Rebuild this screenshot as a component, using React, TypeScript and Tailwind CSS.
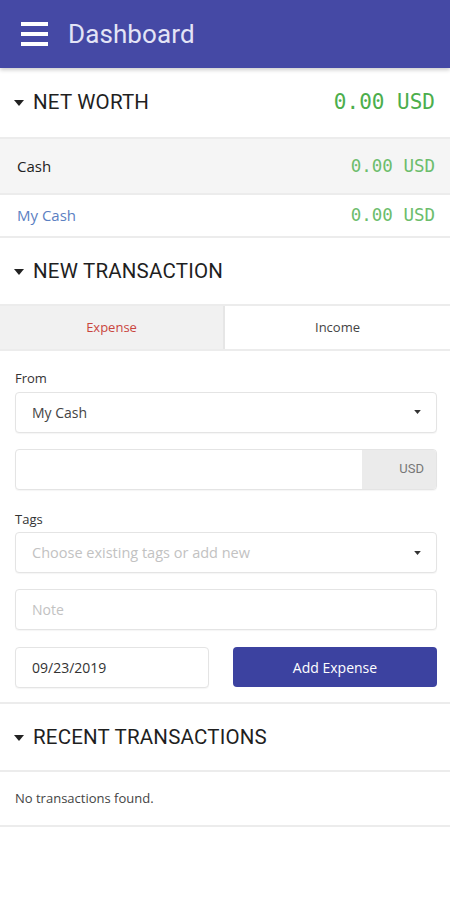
function Caret({ className = "" }: { className?: string }) {
  return (
    <svg viewBox="0 0 10 6" className={className} width="10" height="6">
      <path d="M0 0h10L5 6z" fill="currentColor" />
    </svg>
  );
}

function Hamburger() {
  return (
    <svg width="27" height="24" viewBox="0 0 27 24" className="text-white">
      <rect x="0" y="0" width="27" height="4" fill="currentColor" />
      <rect x="0" y="10" width="27" height="4" fill="currentColor" />
      <rect x="0" y="20" width="27" height="4" fill="currentColor" />
    </svg>
  );
}

function SectionHeading({ title, right, h }: { title: string; right?: string; h: string }) {
  return (
    <div className={`flex items-center justify-between pl-[14px] pr-[15px] border-b-2 border-[#ececec] ${h}`}>
      <div className="flex items-center gap-[9px] text-[#1f1f1f]">
        <Caret className="text-[#222] mt-[1px]" />
        <span className="text-[20.5px] tracking-[0.2px] font-['Roboto',sans-serif]">{title}</span>
      </div>
      {right && (
        <span className="text-[21px] text-[#4cae4c] font-['DejaVu_Sans_Mono',monospace]">{right}</span>
      )}
    </div>
  );
}

const field = "h-[41px] rounded-[4px] border border-[#e4e4e4] bg-white shadow-[0_1px_1px_rgba(0,0,0,0.04)]";

export default function App() {
  return (
    <div className="min-h-screen bg-white font-['Open_Sans',sans-serif] text-[#333]">
      {/* Top bar */}
      <div className="h-[68px] bg-[#4549a5] flex items-center pl-[21px] gap-[20px] shadow-[0_2px_4px_rgba(0,0,0,0.2)] relative z-10">
        <Hamburger />
        <span className="text-[26px] text-[#e3e4f6] font-['Roboto',sans-serif] tracking-[0.1px]">Dashboard</span>
      </div>

      {/* Net worth */}
      <SectionHeading title="NET WORTH" right="0.00 USD" h="h-[71px]" />
      <div className="h-[56px] bg-[#f5f5f5] flex items-center justify-between pl-[17px] pr-[15px] border-b-2 border-[#ececec]">
        <span className="text-[15px] text-[#222]">Cash</span>
        <span className="text-[17.5px] text-[#6cbd6c] font-['DejaVu_Sans_Mono',monospace]">0.00 USD</span>
      </div>
      <div className="h-[43px] flex items-center justify-between pl-[17px] pr-[15px] border-b-2 border-[#ececec]">
        <span className="text-[15px] text-[#5b80c2]">My Cash</span>
        <span className="text-[17.5px] text-[#6cbd6c] font-['DejaVu_Sans_Mono',monospace]">0.00 USD</span>
      </div>

      {/* New transaction */}
      <SectionHeading title="NEW TRANSACTION" h="h-[68px]" />
      <div className="grid grid-cols-2 h-[45px] border-b-2 border-[#ececec] text-[13px]">
        <div className="bg-[#f1f1f1] flex items-center justify-center text-[#c9453e] border-r-2 border-[#e6e6e6]">Expense</div>
        <div className="flex items-center justify-center text-[#444]">Income</div>
      </div>

      <div className="pl-[15px] pr-[13px] pt-[18px] pb-[14px] flex flex-col border-b-2 border-[#ececec]">
        <label className="text-[13px] text-[#333] mb-[3px]">From</label>
        <div className={`${field} flex items-center justify-between pl-[16px] pr-[15px]`}>
          <span className="text-[14px] text-[#444]">My Cash</span>
          <Caret className="text-[#333] w-[7px] h-[4px]" />
        </div>

        <div className={`${field} mt-[16px] flex overflow-hidden`}>
          <div className="flex-1" />
          <div className="w-[74px] bg-[#ebebeb] flex items-center justify-end pr-[12px] text-[13px] text-[#777] font-['Roboto',sans-serif]">USD</div>
        </div>

        <label className="text-[13px] text-[#333] mt-[20px] mb-[3px]">Tags</label>
        <div className={`${field} flex items-center justify-between pl-[16px] pr-[15px]`}>
          <span className="text-[14.5px] text-[#c2c2c2]">Choose existing tags or add new</span>
          <Caret className="text-[#333] w-[7px] h-[4px]" />
        </div>

        <div className={`${field} mt-[16px] flex items-center pl-[16px]`}>
          <span className="text-[14px] text-[#c2c2c2]">Note</span>
        </div>

        <div className="mt-[17px] flex gap-[24px]">
          <div className={`${field} w-[194px] flex items-center pl-[16px]`}>
            <span className="text-[14px] text-[#333]">09/23/2019</span>
          </div>
          <button className="flex-1 h-[40px] rounded-[4px] bg-[#3c42a0] text-white text-[14px]">Add Expense</button>
        </div>
      </div>

      {/* Recent transactions */}
      <SectionHeading title="RECENT TRANSACTIONS" h="h-[68px]" />
      <div className="h-[55px] flex items-center pl-[15px] border-b-2 border-[#ececec]">
        <span className="text-[13px] text-[#444]">No transactions found.</span>
      </div>
    </div>
  );
}
